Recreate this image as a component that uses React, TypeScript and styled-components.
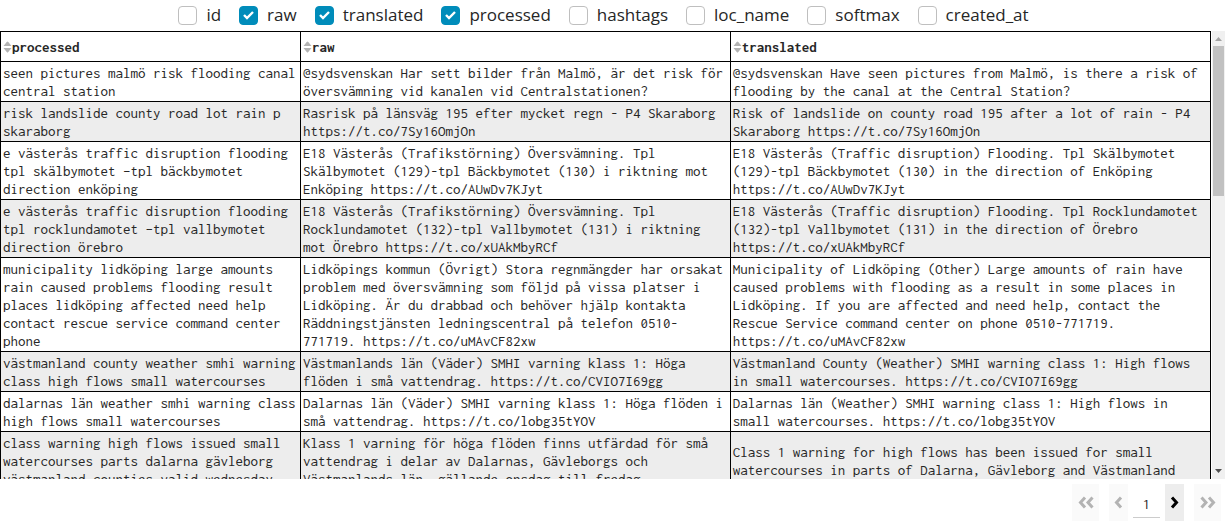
import React, { useState } from "react";
import styled, { createGlobalStyle } from "styled-components";

const GlobalStyle = createGlobalStyle`
  * { box-sizing: border-box; }
  body { margin: 0; background: #fff; color: #262626; font-family: "Open Sans", sans-serif; }
`;

const mono = `Inconsolata, "Noto Sans Mono CJK JP", "Noto Sans Mono CJK SC", "Liberation Mono", monospace`;

const Page = styled.div`
  display: flex;
  flex-direction: column;
  height: 100vh;
`;

const ColumnPicker = styled.div`
  display: flex;
  justify-content: center;
  flex: none;
  height: 31px;
`;

const Option = styled.label`
  display: flex;
  align-items: center;
  gap: 9px;
  height: 30px;
  margin-right: 18px;
  font-size: 17px;
  line-height: 24px;
`;

const CheckFrame = styled.span`
  display: grid;
  width: 19px;
  height: 19px;
  > * { grid-area: 1 / 1; }
`;

const Checkbox = styled.input`
  appearance: none;
  width: 19px;
  height: 19px;
  margin: 0;
  border: 1px solid #bfbfbf;
  border-radius: 4px;
  background: #fff;
  &:checked { border-color: #008cba; background: #008cba; }
`;

const Tick = styled.svg`
  place-self: center;
  z-index: 1;
  pointer-events: none;
`;

const TableArea = styled.div`
  display: flex;
  flex: 1;
  min-height: 0;
  gap: 1px;
`;

const Scroller = styled.div`
  flex: 1;
  overflow-y: auto;
  scrollbar-width: none;
`;

const Table = styled.table`
  width: 100%;
  border-collapse: collapse;
  table-layout: fixed;
  font-family: ${mono};
  font-size: 15px;
  line-height: 18px;
`;

const HeadCell = styled.th<{ $share?: string }>`
  width: ${(p) => p.$share ?? "auto"};
  height: 30px;
  padding: 0 2px;
  border: 1px solid #000;
  text-align: left;
`;

const SortButton = styled.button`
  display: flex;
  align-items: center;
  padding: 0;
  border: 0;
  background: none;
  color: inherit;
  font: inherit;
`;

const Row = styled.tr`
  &:nth-child(even) { background: #ededed; }
`;

const Cell = styled.td`
  padding: 2px 2px 1px;
  border: 1px solid #000;
  vertical-align: middle;
`;

const Rail = styled.div`
  display: flex;
  flex-direction: column;
  align-items: center;
  flex: none;
  width: 13px;
  background: #f0f0f0;
`;

const RailArrow = styled.svg`
  flex: none;
  width: 13px;
  height: 15px;
`;

const RailTrack = styled.div`
  flex: 1;
  width: 11px;
`;

const Thumb = styled.div`
  height: 36%;
  background: #c1c1c1;
`;

const Pager = styled.nav`
  display: flex;
  align-items: flex-end;
  justify-content: flex-end;
  flex: none;
  gap: 5px;
  height: 42px;
  padding-right: 4px;
`;

const PageButton = styled.button<{ $wide?: boolean; $outer?: "left" | "right" }>`
  display: grid;
  place-items: center;
  width: ${(p) => (p.$wide ? 27 : 19)}px;
  height: 37px;
  margin-right: ${(p) => (p.$outer === "left" ? 5 : 0)}px;
  margin-left: ${(p) => (p.$outer === "right" ? 5 : 0)}px;
  padding: 0;
  border: 0;
  background: #ededed;
  color: #000;
  &:disabled { background: #fafafa; color: #b3b3b3; }
`;

const PageInput = styled.input`
  width: 27px;
  height: 33px;
  margin-bottom: 3px;
  padding: 6px 0 0;
  border: 0;
  border-bottom: 1px solid #ccc;
  background: none;
  color: #262626;
  font-family: ${mono};
  font-size: 15px;
  text-align: center;
`;

const columnNames = ["id", "raw", "translated", "processed", "hashtags", "loc_name", "softmax", "created_at"];

const rows = [
  ["seen pictures malmö risk flooding canal central station",
   "@sydsvenskan Har sett bilder från Malmö, är det risk för översvämning vid kanalen vid Centralstationen?",
   "@sydsvenskan Have seen pictures from Malmö, is there a risk of flooding by the canal at the Central Station?"],
  ["risk landslide county road lot rain p skaraborg",
   "Rasrisk på länsväg 195 efter mycket regn - P4 Skaraborg https://t.co/7Sy16OmjOn",
   "Risk of landslide on county road 195 after a lot of rain - P4 Skaraborg https://t.co/7Sy16OmjOn"],
  ["e västerås traffic disruption flooding tpl skälbymotet –tpl bäckbymotet direction enköping",
   "E18 Västerås (Trafikstörning) Översvämning. Tpl Skälbymotet (129)-tpl Bäckbymotet (130) i riktning mot Enköping https://t.co/AUwDv7KJyt",
   "E18 Västerås (Traffic disruption) Flooding. Tpl Skälbymotet (129)-tpl Bäckbymotet (130) in the direction of Enköping https://t.co/AUwDv7KJyt"],
  ["e västerås traffic disruption flooding tpl rocklundamotet –tpl vallbymotet direction örebro",
   "E18 Västerås (Trafikstörning) Översvämning. Tpl Rocklundamotet (132)-tpl Vallbymotet (131) i riktning mot Örebro https://t.co/xUAkMbyRCf",
   "E18 Västerås (Traffic disruption) Flooding. Tpl Rocklundamotet (132)-tpl Vallbymotet (131) in the direction of Örebro https://t.co/xUAkMbyRCf"],
  ["municipality lidköping large amounts rain caused problems flooding result places lidköping affected need help contact rescue service command center phone",
   "Lidköpings kommun (Övrigt) Stora regnmängder har orsakat problem med översvämning som följd på vissa platser i Lidköping. Är du drabbad och behöver hjälp kontakta Räddningstjänsten ledningscentral på telefon 0510-771719. https://t.co/uMAvCF82xw",
   "Municipality of Lidköping (Other) Large amounts of rain have caused problems with flooding as a result in some places in Lidköping. If you are affected and need help, contact the Rescue Service command center on phone 0510-771719. https://t.co/uMAvCF82xw"],
  ["västmanland county weather smhi warning class high flows small watercourses",
   "Västmanlands län (Väder) SMHI varning klass 1: Höga flöden i små vattendrag. https://t.co/CVIO7I69gg",
   "Västmanland County (Weather) SMHI warning class 1: High flows in small watercourses. https://t.co/CVIO7I69gg"],
  ["dalarnas län weather smhi warning class high flows small watercourses",
   "Dalarnas län (Väder) SMHI varning klass 1: Höga flöden i små vattendrag. https://t.co/lobg35tYOV",
   "Dalarnas län (Weather) SMHI warning class 1: High flows in small watercourses. https://t.co/lobg35tYOV"],
  ["class warning high flows issued small watercourses parts dalarna gävleborg västmanland counties valid wednesday friday",
   "Klass 1 varning för höga flöden finns utfärdad för små vattendrag i delar av Dalarnas, Gävleborgs och Västmanlands län, gällande onsdag till fredag. https://t.co/smhivarning",
   "Class 1 warning for high flows has been issued for small watercourses in parts of Dalarna, Gävleborg and Västmanland counties, valid Wednesday to Friday."],
];

const SortIcon = () => (
  <svg width="9" height="12" viewBox="0 0 9 12" fill="#b3b3b3" aria-hidden="true">
    <path d="M0.5 5 L3.7 1 Q4.5 0 5.3 1 L8.5 5 Z M0.5 7 L3.7 11 Q4.5 12 5.3 11 L8.5 7 Z" />
  </svg>
);

const Chevron = ({ d, width = 9 }: { d: string; width?: number }) => (
  <svg width={width} height="13" viewBox={`0 0 ${width} 13`} fill="none" stroke="currentColor" strokeWidth="3" aria-hidden="true">
    <path d={d} />
  </svg>
);

export default function App() {
  const [shown, setShown] = useState(["raw", "translated", "processed"]);
  const toggle = (name: string) =>
    setShown((s) => (s.includes(name) ? s.filter((n) => n !== name) : [...s, name]));

  return (
    <Page>
      <GlobalStyle />
      <ColumnPicker>
        {columnNames.map((name) => (
          <Option key={name}>
            <CheckFrame>
              <Checkbox type="checkbox" checked={shown.includes(name)} onChange={() => toggle(name)} />
              {shown.includes(name) && (
                <Tick width="11" height="9" viewBox="0 0 11 9" fill="none" stroke="#fff" strokeWidth="2.4">
                  <path d="M1 4 L4 7 L10 1" />
                </Tick>
              )}
            </CheckFrame>
            {name}
          </Option>
        ))}
      </ColumnPicker>
      <TableArea>
        <Scroller>
          <Table>
            <thead>
              <tr>
                <HeadCell $share="24.8%"><SortButton><SortIcon />processed</SortButton></HeadCell>
                <HeadCell $share="35.5%"><SortButton><SortIcon />raw</SortButton></HeadCell>
                <HeadCell><SortButton><SortIcon />translated</SortButton></HeadCell>
              </tr>
            </thead>
            <tbody>
              {rows.map((cells, i) => (
                <Row key={i}>
                  {cells.map((text, j) => <Cell key={j}>{text}</Cell>)}
                </Row>
              ))}
            </tbody>
          </Table>
        </Scroller>
        <Rail aria-hidden="true">
          <RailArrow viewBox="0 0 13 15"><path d="M3 10 L6.5 6 L10 10 Z" fill="#a3a3a3" /></RailArrow>
          <RailTrack><Thumb /></RailTrack>
          <RailArrow viewBox="0 0 13 15"><path d="M3 5 L6.5 9 L10 5 Z" fill="#505050" /></RailArrow>
        </Rail>
      </TableArea>
      <Pager aria-label="Pages">
        <PageButton $wide $outer="left" disabled aria-label="First page"><Chevron width={16} d="M7 1.5 L2.5 6.5 L7 11.5 M14.5 1.5 L10 6.5 L14.5 11.5" /></PageButton>
        <PageButton disabled aria-label="Previous page"><Chevron d="M7 1.5 L2.5 6.5 L7 11.5" /></PageButton>
        <PageInput aria-label="Page number" defaultValue="1" />
        <PageButton aria-label="Next page"><Chevron d="M2 1.5 L6.5 6.5 L2 11.5" /></PageButton>
        <PageButton $wide $outer="right" disabled aria-label="Last page"><Chevron width={16} d="M1.5 1.5 L6 6.5 L1.5 11.5 M9 1.5 L13.5 6.5 L9 11.5" /></PageButton>
      </Pager>
    </Page>
  );
}
